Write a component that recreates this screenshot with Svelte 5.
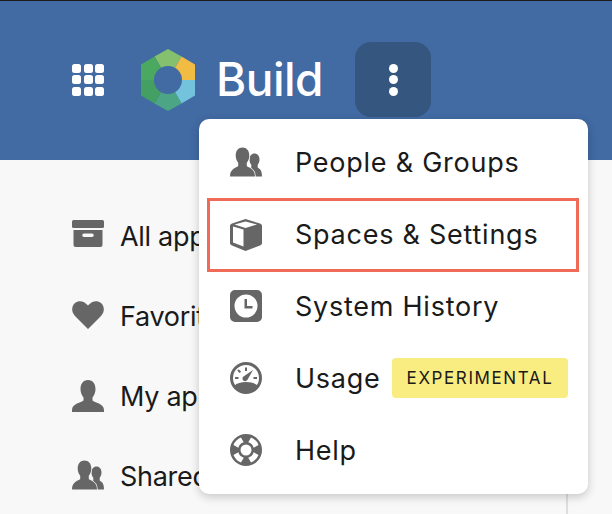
<script>
	const sideItems = [
		{ label: 'All apps', icon: 'archive' },
		{ label: 'Favorites', icon: 'heart' },
		{ label: 'My apps', icon: 'user' },
		{ label: 'Shared with me', icon: 'users' }
	];
	const menuItems = [
		{ label: 'People & Groups', icon: 'users' },
		{ label: 'Spaces & Settings', icon: 'cube', active: true },
		{ label: 'System History', icon: 'clock' },
		{ label: 'Usage', icon: 'gauge', badge: 'EXPERIMENTAL' },
		{ label: 'Help', icon: 'help' }
	];
	const dots = [0, 1, 2, 3, 4, 5, 6, 7, 8];
	const hexSegments = [
		{ points: '27,31 13.5,7.6 27,0 40.5,7.6', fill: '#85c06e' },
		{ points: '27,31 40.5,7.6 54,15.5 54,31', fill: '#f0bc44' },
		{ points: '27,31 54,31 54,46.5 40.5,54.4', fill: '#72c3db' },
		{ points: '27,31 40.5,54.4 27,62 13.5,54.4', fill: '#4ca584' },
		{ points: '27,31 13.5,54.4 0,46.5 0,31', fill: '#439f62' },
		{ points: '27,31 0,31 0,15.5 13.5,7.6', fill: '#4aa860' }
	];
	const ringAngles = [45, 135, 225, 315];
</script>

{#snippet icon(name)}
	<svg class="icon" viewBox="0 0 32 32" aria-hidden="true">
		{#if name === 'archive'}
			<rect x="0" y="0" width="32" height="8" rx="1.5" />
			<path fill-rule="evenodd" d="M1.5 10h29v15a2 2 0 0 1-2 2h-25a2 2 0 0 1-2-2zM12 13.500a1.500 1.500 0 0 0 0 3.500h8a1.500 1.500 0 0 0 0-3.500z" />
		{:else if name === 'heart'}
			<path d="M16 29 3 16C-1 12-.5 6 3 3c4-3 9-2 13 2.500C20 1 25 0 29 3c3.500 3 4 9 0 13z" />
		{:else if name === 'user'}
			<path d="M16 0c5 0 7.500 4 7.500 9 0 3.500-1.300 6.500-3 8.500v3c2 2 11.500 3 11.500 9.500v2H0v-2c0-6.500 9.500-7.500 11.500-9.500v-3c-1.700-2-3-5-3-8.500C8.500 4 11 0 16 0z" />
		{:else if name === 'users'}
			<path d="M24.500 6.500c3 0 5 2.500 5 6 0 2.300-.8 4.200-1.800 5.300v2.700c1.500 1.300 4.300 1.800 4.300 9H17c0-7.200 2.800-7.700 4.300-9v-2.700c-1-1.100-1.800-3-1.800-5.300 0-3.500 2-6 5-6z" />
			<path class="front" d="M12.500.5c4.200 0 6.800 3.200 6.800 8 0 3-1 5.500-2.500 7.200v3.300c2 1.800 8.200 2.500 8.200 10.500H0c0-8 6.200-8.700 8.200-10.500v-3.300c-1.500-1.700-2.500-4.200-2.500-7.200 0-4.800 2.600-8 6.800-8z" />
		{:else if name === 'cube'}
			<path fill-rule="evenodd" d="M15.500 0 30 4.500c1.300.4 2 1.300 2 2.500v17c0 1.200-.7 2.100-2 2.500L15.500 32 2 26.500C.7 26 0 25.200 0 24V7c0-1.200.7-2.100 2-2.500zM3 7.500V23.500L13.500 27.500V10.500zM4.500 5.500 15.500 9 27 5.500 15.500 2.500z" />
		{:else if name === 'clock'}
			<path fill-rule="evenodd" d="M5 0h22a5 5 0 0 1 5 5v22a5 5 0 0 1-5 5H5a5 5 0 0 1-5-5V5a5 5 0 0 1 5-5zM16 4.500a11.500 11.500 0 1 0 0 23 11.500 11.500 0 0 0 0-23zM14.500 9h2.500v7h5.500v2.500h-8z" />
		{:else if name === 'gauge'}
			<path fill-rule="evenodd" d="M16 0a16 16 0 1 1 0 32 16 16 0 0 1 0-32zM16 3a13 13 0 1 0 0 26 13 13 0 0 0 0-26z" />
			<path d="M4 24c3-3 7-4 12-4s9 1 12 4c-2 4-6 7-12 7s-10-3-12-7z" />
			<path d="M13.300 18.500c-1.300-1.300-1-3 .2-4L23 8l-5.500 9.800c-.8 1.200-2.900 2-4.200.7z" />
			<path d="M15 5.500h2v3.500h-2zM7.300 8.700l1.400-1.400 2.400 2.400-1.400 1.400zM5 15h3.500v2H5zM23.500 15H27v2h-3.500z" />
		{:else if name === 'help'}
			<circle cx="16" cy="16" r="16" />
			<circle class="cut" cx="16" cy="16" r="5.5" />
			{#each ringAngles as angle (angle)}
				<path class="cut" transform="rotate({angle} 16 16)" d="M10.700 3.600a13.500 13.500 0 0 1 10.600 0L19.800 9a7.500 7.500 0 0 0-7.600 0z" />
			{/each}
		{/if}
	</svg>
{/snippet}

<div class="page">
	<header>
		<div class="waffle">
			{#each dots as d (d)}
				<span></span>
			{/each}
		</div>
		<svg class="logo" viewBox="0 0 54 62" aria-hidden="true">
			{#each hexSegments as seg (seg.fill)}
				<polygon points={seg.points} fill={seg.fill} />
			{/each}
			<circle cx="27" cy="31" r="14" fill="#426aa3" />
		</svg>
		<span class="brand">Build</span>
		<button class="kebab" aria-label="More">
			<span></span><span></span><span></span>
		</button>
	</header>

	<div class="content">
		<nav class="side">
			{#each sideItems as item (item.label)}
				<a class="side-item" href="#top">
					{@render icon(item.icon)}
					{item.label}
				</a>
			{/each}
		</nav>
	</div>

	<div class="menu">
		{#each menuItems as item (item.label)}
			<div class="menu-item" class:active={item.active}>
				{@render icon(item.icon)}
				<span>{item.label}</span>
				{#if item.badge}
					<span class="badge">{item.badge}</span>
				{/if}
			</div>
		{/each}
	</div>
</div>

<style>
	:global(body) {
		margin: 0;
		overflow: hidden;
	}

	.page {
		position: relative;
		width: 612px;
		height: 514px;
		overflow: hidden;
		background: #f8f8f8;
		font-family: Inter, "Liberation Sans", sans-serif;
		color: #1a1a1a;
	}

	header {
		display: flex;
		align-items: center;
		box-sizing: border-box;
		height: 160px;
		padding: 0 0 0 72px;
		background: #426aa3;
		border-top: 1px solid #1b1b1b;
	}

	.waffle {
		display: grid;
		grid-template-columns: repeat(3, 9px);
		gap: 2.500px;
		width: 32px;
		margin-top: -2px;
	}

	.waffle span {
		height: 9px;
		border-radius: 2.500px;
		background: #fff;
	}

	.logo {
		width: 54px;
		height: 62px;
		margin-left: 37px;
		margin-top: -2px;
	}

	.brand {
		flex: none;
		width: 139px;
		margin-left: 21px;
		margin-top: -4px;
		font-size: 46px;
		font-weight: 450;
		letter-spacing: -0.5px;
		color: #fff;
	}

	.kebab {
		display: flex;
		flex-direction: column;
		align-items: center;
		justify-content: center;
		gap: 2.500px;
		flex: none;
		width: 76px;
		height: 75px;
		margin-top: -2px;
		padding: 0;
		border: 0;
		border-radius: 16px;
		background: #35577f;
	}

	.kebab span {
		width: 9px;
		height: 9px;
		border-radius: 50%;
		background: #fff;
	}

	.content {
		--icon-gap: #f8f8f8;
		box-sizing: border-box;
		width: 568px;
		height: 354px;
		border-right: 2px solid #dedede;
	}

	.side {
		display: flex;
		flex-direction: column;
		gap: 48px;
		padding: 60px 0 0 72px;
	}

	.side-item {
		display: flex;
		align-items: center;
		gap: 16px;
		height: 32px;
		font-size: 27px;
		letter-spacing: -0.3px;
		color: #1a1a1a;
		text-decoration: none;
		white-space: nowrap;
	}

	.icon {
		flex: none;
		width: 32px;
		height: 32px;
		fill: #666;
	}

	.front {
		stroke: var(--icon-gap);
		stroke-width: 1.5px;
		paint-order: stroke;
	}

	.cut {
		fill: var(--icon-gap);
	}

	.menu {
		--icon-gap: #fff;
		position: absolute;
		left: 199px;
		top: 119px;
		display: flex;
		flex-direction: column;
		box-sizing: border-box;
		width: 389px;
		height: 375px;
		padding: 8px 10px 8px 9px;
		background: #fff;
		border-radius: 10px;
		box-shadow: 0 3px 10px rgba(0, 0, 0, 0.2);
	}

	.menu-item {
		display: flex;
		align-items: center;
		gap: 33px;
		box-sizing: border-box;
		height: 72px;
		padding-left: 22px;
		font-size: 27px;
		letter-spacing: 0.75px;
		color: #1a1a1a;
		white-space: nowrap;
	}

	.menu-item.active {
		outline: 3px solid #f06a58;
		outline-offset: -2px;
	}

	.badge {
		margin-left: -22px;
		padding: 9px 15px;
		border-radius: 4px;
		background: #f9ed82;
		font-size: 17px;
		line-height: 22px;
		letter-spacing: 1.6px;
	}
</style>
